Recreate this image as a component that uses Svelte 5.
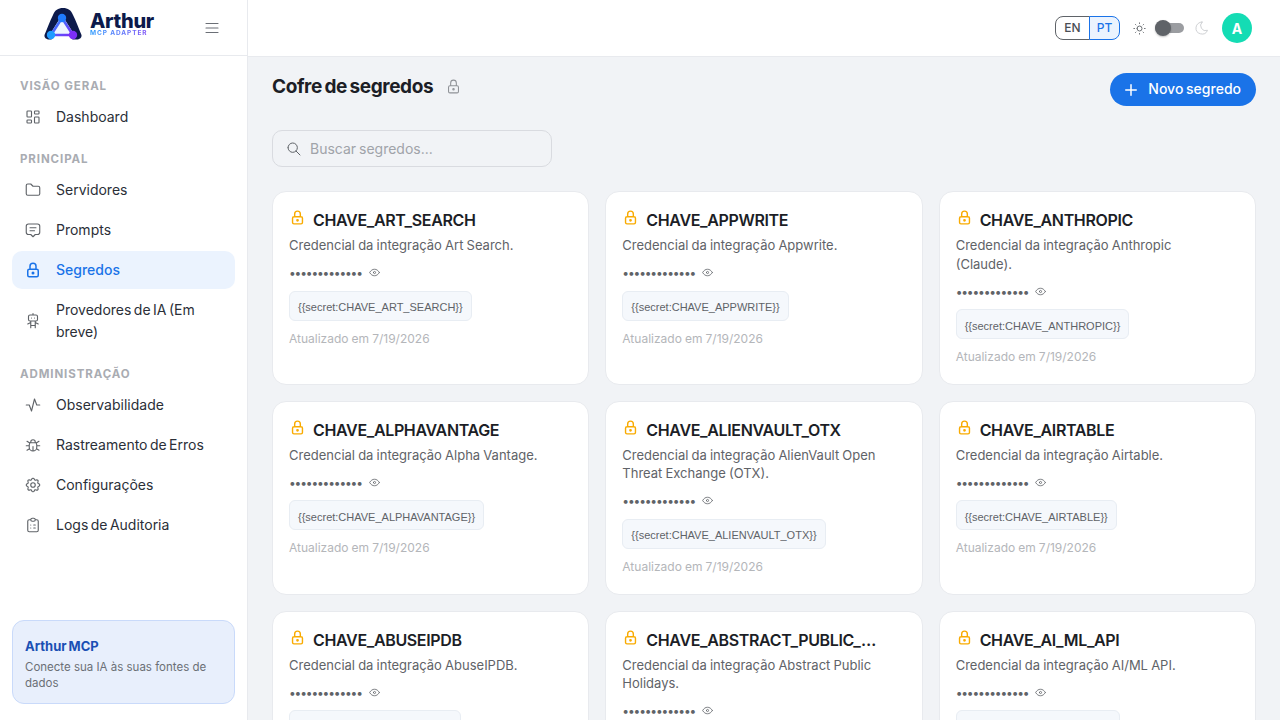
<script>
    const paths = {
        dashboard: "M5 4h4a1 1 0 0 1 1 1v6a1 1 0 0 1 -1 1h-4a1 1 0 0 1 -1 -1v-6a1 1 0 0 1 1 -1 M5 16h4a1 1 0 0 1 1 1v2a1 1 0 0 1 -1 1h-4a1 1 0 0 1 -1 -1v-2a1 1 0 0 1 1 -1 M15 12h4a1 1 0 0 1 1 1v6a1 1 0 0 1 -1 1h-4a1 1 0 0 1 -1 -1v-6a1 1 0 0 1 1 -1 M15 4h4a1 1 0 0 1 1 1v2a1 1 0 0 1 -1 1h-4a1 1 0 0 1 -1 -1v-2a1 1 0 0 1 1 -1",
        folder: "M5 4h4l3 3h7a2 2 0 0 1 2 2v8a2 2 0 0 1 -2 2h-14a2 2 0 0 1 -2 -2v-11a2 2 0 0 1 2 -2",
        message: "M8 9h8 M8 13h6 M9 18h-3a3 3 0 0 1 -3 -3v-8a3 3 0 0 1 3 -3h12a3 3 0 0 1 3 3v8a3 3 0 0 1 -3 3h-3l-3 3l-3 -3z",
        lock: "M5 13a2 2 0 0 1 2 -2h10a2 2 0 0 1 2 2v6a2 2 0 0 1 -2 2h-10a2 2 0 0 1 -2 -2v-6z M11 16a1 1 0 1 0 2 0a1 1 0 0 0 -2 0 M8 11v-4a4 4 0 1 1 8 0v4",
        robot: "M6 6a2 2 0 0 1 2 -2h8a2 2 0 0 1 2 2v4a2 2 0 0 1 -2 2h-8a2 2 0 0 1 -2 -2z M12 2v2 M9 12v9 M15 12v9 M5 16l4 -2 M15 14l4 2 M9 18h6 M10 8v.01 M14 8v.01",
        activity: "M3 12h4l3 8l4 -16l3 8h4",
        bug: "M9 9v-1a3 3 0 0 1 6 0v1 M8 9h8a6 6 0 0 1 1 3v3a5 5 0 0 1 -10 0v-3a6 6 0 0 1 1 -3 M3 13h4 M17 13h4 M12 20v-6 M4 19l3.35 -2 M20 19l-3.35 -2 M4 7l3.75 2.4 M20 7l-3.75 2.4",
        settings: "M10.325 4.317c.426 -1.756 2.924 -1.756 3.35 0a1.724 1.724 0 0 0 2.573 1.066c1.543 -.94 3.31 .826 2.37 2.37a1.724 1.724 0 0 0 1.065 2.572c1.756 .426 1.756 2.924 0 3.35a1.724 1.724 0 0 0 -1.066 2.573c.94 1.543 -.826 3.31 -2.37 2.37a1.724 1.724 0 0 0 -2.572 1.065c-.426 1.756 -2.924 1.756 -3.35 0a1.724 1.724 0 0 0 -2.573 -1.066c-1.543 .94 -3.31 -.826 -2.37 -2.37a1.724 1.724 0 0 0 -1.065 -2.572c-1.756 -.426 -1.756 -2.924 0 -3.35a1.724 1.724 0 0 0 1.066 -2.573c-.94 -1.543 .826 -3.31 2.37 -2.37c1 .608 2.296 .07 2.572 -1.065z M9 12a3 3 0 1 0 6 0a3 3 0 0 0 -6 0",
        clipboard: "M9 5h-2a2 2 0 0 0 -2 2v12a2 2 0 0 0 2 2h10a2 2 0 0 0 2 -2v-12a2 2 0 0 0 -2 -2h-2 M9 5a2 2 0 0 1 2 -2h2a2 2 0 0 1 2 2a2 2 0 0 1 -2 2h-2a2 2 0 0 1 -2 -2z M9 12h.01 M13 12h2 M9 16h.01 M13 16h2",
        menu: "M4 6h16 M4 12h16 M4 18h16",
        sun: "M8 12a4 4 0 1 0 8 0a4 4 0 1 0 -8 0 M3 12h1m8 -9v1m8 8h1m-9 8v1m-6.4 -15.4l.7 .7m12.1 -.7l-.7 .7m0 11.4l.7 .7m-12.1 -.7l-.7 .7",
        moon: "M12 3c.132 0 .263 0 .393 0a7.5 7.5 0 0 0 7.92 12.446a9 9 0 1 1 -8.313 -12.454z",
        search: "M3 10a7 7 0 1 0 14 0a7 7 0 1 0 -14 0 M21 21l-6 -6",
        eye: "M10 12a2 2 0 1 0 4 0a2 2 0 0 0 -4 0 M21 12c-2.4 4 -5.4 6 -9 6c-3.6 0 -6.6 -2 -9 -6c2.4 -4 5.4 -6 9 -6c3.6 0 6.6 2 9 6",
        plus: "M12 5v14 M5 12h14",
    };

    const nav = [
        { title: "VISÃO GERAL", items: [{ label: "Dashboard", icon: "dashboard" }] },
        {
            title: "PRINCIPAL",
            items: [
                { label: "Servidores", icon: "folder" },
                { label: "Prompts", icon: "message" },
                { label: "Segredos", icon: "lock", active: true },
                { label: "Provedores de IA (Em breve)", icon: "robot" },
            ],
        },
        {
            title: "ADMINISTRAÇÃO",
            items: [
                { label: "Observabilidade", icon: "activity" },
                { label: "Rastreamento de Erros", icon: "bug" },
                { label: "Configurações", icon: "settings" },
                { label: "Logs de Auditoria", icon: "clipboard" },
            ],
        },
    ];

    const secrets = [
        { key: "CHAVE_ART_SEARCH", name: "Art Search" },
        { key: "CHAVE_APPWRITE", name: "Appwrite" },
        { key: "CHAVE_ANTHROPIC", name: "Anthropic (Claude)" },
        { key: "CHAVE_ALPHAVANTAGE", name: "Alpha Vantage" },
        { key: "CHAVE_ALIENVAULT_OTX", name: "AlienVault Open Threat Exchange (OTX)" },
        { key: "CHAVE_AIRTABLE", name: "Airtable" },
        { key: "CHAVE_ABUSEIPDB", name: "AbuseIPDB" },
        { key: "CHAVE_ABSTRACT_PUBLIC_HOLIDAYS", name: "Abstract Public Holidays" },
        { key: "CHAVE_AI_ML_API", name: "AI/ML API" },
    ];
</script>

{#snippet icon(name, size = 18, width = 1.5)}
    <svg
        width={size}
        height={size}
        viewBox="0 0 24 24"
        fill="none"
        stroke="currentColor"
        stroke-width={width}
        stroke-linecap="round"
        stroke-linejoin="round"
    >
        <path d={paths[name]} />
    </svg>
{/snippet}

<div class="app">
    <aside class="sidebar">
        <div class="brand">
            <div class="logo">
                <svg width="38" height="33" viewBox="0 0 38 33">
                    <defs>
                        <linearGradient id="tri" x1="0" y1="0" x2="1" y2="1">
                            <stop offset="0" stop-color="#2a8cff" />
                            <stop offset="1" stop-color="#7b2ff7" />
                        </linearGradient>
                    </defs>
                    <path
                        d="M.5 28C3 22 6 14 9 8c2-5 5-7 10-7s8 2 10 7c3 6 6 14 8.500 20 .5 3-2.500 4.500-4.500 4.500H5C3 32.500 0 31 .5 28z"
                        fill="#0c1a4b"
                    />
                    <path d="M18 8 31 29l-3 4H8l-3-4z" fill="#fff" />
                    <path d="M18 11 7 28h22z" fill="#eef5ff" stroke="url(#tri)" stroke-width="2.600" />
                    <circle cx="18" cy="11" r="4.200" fill="#1f7bff" />
                    <circle cx="7" cy="28" r="4.200" fill="#1f9bff" />
                    <circle cx="29" cy="28" r="4.200" fill="#7b2ff7" />
                </svg>
                <div class="wordmark">
                    <span class="name">Arthur</span>
                    <span class="tag">MCP ADAPTER</span>
                </div>
            </div>
            <button class="menu">{@render icon("menu", 18)}</button>
        </div>

        <nav>
            {#each nav as group}
                <div class="group-title">{group.title}</div>
                {#each group.items as item}
                    <a class="item" class:active={item.active} href={"#"}>
                        <span class="item-icon">{@render icon(item.icon, 18, item.active ? 2 : 1.5)}</span>
                        <span>{item.label}</span>
                    </a>
                {/each}
            {/each}
        </nav>

        <div class="promo">
            <div class="promo-title">Arthur MCP</div>
            <div class="promo-text">Conecte sua IA às suas fontes de dados</div>
        </div>
    </aside>

    <div class="main">
        <header>
            <div class="lang">
                <button>EN</button>
                <button class="on">PT</button>
            </div>
            <span class="sun">{@render icon("sun", 15)}</span>
            <span class="switch"><span class="knob"></span></span>
            <span class="moon">{@render icon("moon", 16)}</span>
            <span class="avatar">A</span>
        </header>

        <main>
            <div class="page-head">
                <div class="page-title">
                    <h1>Cofre de segredos</h1>
                    <span class="title-lock">{@render icon("lock", 17)}</span>
                </div>
                <button class="new">{@render icon("plus", 18, 2)} <span>Novo segredo</span></button>
            </div>

            <label class="search">
                {@render icon("search", 16)}
                <input type="text" placeholder="Buscar segredos..." />
            </label>

            <div class="grid">
                {#each secrets as secret}
                    <article class="card">
                        <div class="card-head">
                            <span class="card-lock">{@render icon("lock", 17, 2)}</span>
                            <h3>{secret.key}</h3>
                        </div>
                        <p class="desc">Credencial da integração {secret.name}.</p>
                        <div class="value">
                            <span class="dots">•••••••••••••</span>
                            <span class="eye">{@render icon("eye", 13)}</span>
                        </div>
                        <code class="chip">{`{{secret:${secret.key}}}`}</code>
                        <div class="updated">Atualizado em 7/19/2026</div>
                    </article>
                {/each}
            </div>
        </main>
    </div>
</div>

<style>
    :global(body) {
        margin: 0;
        font-family: "Inter", "Open Sans", sans-serif;
        color: #1c1e26;
    }

    svg {
        display: block;
    }

    button {
        font-family: inherit;
        cursor: pointer;
    }

    .app {
        display: flex;
        height: 720px;
        overflow: hidden;
        background: #f1f3f6;
    }

    .sidebar {
        width: 247px;
        flex: none;
        display: flex;
        flex-direction: column;
        background: #fff;
        border-right: 1px solid #e8eaee;
    }

    .brand {
        height: 55px;
        flex: none;
        display: flex;
        align-items: center;
        justify-content: space-between;
        padding: 0 26px 0 44px;
        border-bottom: 1px solid #e8eaee;
    }

    .logo {
        display: flex;
        align-items: flex-start;
        gap: 8px;
        margin-top: -9px;
    }

    .wordmark {
        display: flex;
        flex-direction: column;
        margin-top: 6px;
    }

    .name {
        font-size: 20px;
        line-height: 17px;
        font-weight: 800;
        color: #0c1a4b;
        letter-spacing: -0.3px;
    }

    .tag {
        font-size: 6.500px;
        line-height: 6px;
        font-weight: 700;
        letter-spacing: 0.9px;
        background: linear-gradient(90deg, #2c9cff, #8a4bf5);
        -webkit-background-clip: text;
        background-clip: text;
        color: transparent;
    }

    .menu {
        border: 0;
        background: none;
        padding: 0;
        color: #6b6f76;
    }

    nav {
        flex: 1;
        padding: 0 12px;
    }

    .group-title {
        padding: 23px 8px 5px;
        font-size: 11.500px;
        line-height: 14px;
        font-weight: 700;
        letter-spacing: 0.9px;
        color: #a9acb2;
    }

    nav .item + .group-title {
        padding-top: 14px;
    }

    .item {
        display: flex;
        align-items: center;
        gap: 14px;
        padding: 8px 16px 8px 12px;
        margin-bottom: 2px;
        border-radius: 10px;
        font-size: 14px;
        line-height: 22px;
        color: #2b2f38;
        text-decoration: none;
        word-spacing: -1.500px;
    }

    .item-icon {
        flex: none;
        color: #5f6368;
    }

    .item.active {
        background: #ebf3fe;
        color: #1a73e8;
        font-weight: 500;
    }

    .item.active .item-icon {
        color: #1a73e8;
    }

    .promo {
        margin: 0 12px 16px;
        padding: 15px 12px 12px;
        border: 1px solid #c9dafa;
        border-radius: 12px;
        background: #e8effc;
    }

    .promo-title {
        font-size: 13px;
        line-height: 20px;
        font-weight: 700;
        color: #1a4fb4;
        word-spacing: -1px;
    }

    .promo-text {
        margin-top: 3px;
        font-size: 11.500px;
        line-height: 16px;
        color: #6b6f76;
    }

    .main {
        flex: 1;
        min-width: 0;
        display: flex;
        flex-direction: column;
    }

    header {
        height: 56px;
        flex: none;
        display: flex;
        align-items: center;
        justify-content: flex-end;
        padding: 0 28px 0 0;
        background: #fff;
        border-bottom: 1px solid #e8eaee;
    }

    .lang {
        display: flex;
        margin-top: -1px;
    }

    .lang button {
        width: 35px;
        height: 24px;
        padding: 0;
        border: 1px solid #5f6368;
        border-radius: 8px 0 0 8px;
        background: #fff;
        font-size: 12px;
        font-weight: 500;
        color: #4a4e55;
    }

    .lang button.on {
        width: 31px;
        margin-left: -1px;
        border-color: #1a73e8;
        border-radius: 0 8px 8px 0;
        background: #ebf3fe;
        color: #1a73e8;
    }

    .sun {
        margin-left: 12px;
        color: #5f6368;
    }

    .switch {
        position: relative;
        width: 29px;
        height: 10px;
        margin-left: 8px;
        border-radius: 5px;
        background: #9b9da1;
    }

    .knob {
        position: absolute;
        left: 0;
        top: -3px;
        width: 16px;
        height: 16px;
        border-radius: 50%;
        background: #5f6368;
        box-shadow: 0 1px 2px rgba(0, 0, 0, 0.25);
    }

    .moon {
        margin-left: 10px;
        color: #cfd1d4;
    }

    .avatar {
        width: 30px;
        height: 30px;
        margin-left: 12px;
        display: flex;
        align-items: center;
        justify-content: center;
        border-radius: 50%;
        background: #14dcb4;
        color: #fff;
        font-size: 14px;
        font-weight: 700;
    }

    main {
        flex: 1;
        min-height: 0;
        padding: 16px 24px 0;
    }

    .page-head {
        display: flex;
        align-items: flex-start;
        justify-content: space-between;
        margin-bottom: 24px;
    }

    .page-title {
        display: flex;
        align-items: center;
        gap: 12px;
        height: 27px;
    }

    h1 {
        margin: 0;
        font-size: 19px;
        line-height: 27px;
        font-weight: 700;
        color: #1c1e26;
        letter-spacing: -0.4px;
        word-spacing: -1.500px;
    }

    .title-lock {
        color: #8f9297;
    }

    .new {
        height: 33px;
        padding: 0 15px 2px 12px;
        display: flex;
        align-items: center;
        gap: 8px;
        border: 0;
        border-radius: 17px;
        background: #1a73e8;
        color: #fff;
        font-size: 14px;
        font-weight: 500;
        word-spacing: -1px;
    }

    .new svg {
        margin-top: 2px;
    }

    .search {
        width: 280px;
        height: 37px;
        box-sizing: border-box;
        display: flex;
        align-items: center;
        gap: 8px;
        padding: 0 13px;
        margin-bottom: 24px;
        border: 1px solid #d9dbe0;
        border-radius: 10px;
        color: #5f6368;
    }

    .search input {
        flex: 1;
        min-width: 0;
        padding: 0;
        border: 0;
        outline: 0;
        background: none;
        font: inherit;
        font-size: 14px;
        word-spacing: -1px;
    }

    .search input::placeholder {
        color: #a0a3a9;
        opacity: 1;
    }

    .grid {
        display: grid;
        grid-template-columns: repeat(3, 1fr);
        gap: 16px;
    }

    .card {
        min-width: 0;
        min-height: 193.800px;
        box-sizing: border-box;
        padding: 16px;
        display: flex;
        flex-direction: column;
        align-items: flex-start;
        border: 1px solid #e8eaee;
        border-radius: 14px;
        background: #fff;
    }

    .card-head {
        width: 100%;
        display: flex;
        align-items: flex-start;
        gap: 7px;
        height: 28px;
    }

    .card-lock {
        flex: none;
        margin-top: 1px;
        color: #f9ab00;
    }

    h3 {
        flex: 1;
        min-width: 0;
        margin: 0 28px 0 0;
        font-size: 16px;
        line-height: 24px;
        font-weight: 600;
        letter-spacing: -0.350px;
        color: #1c1e26;
        white-space: nowrap;
        overflow: hidden;
        text-overflow: ellipsis;
    }

    .desc {
        max-width: 262px;
        margin: 0 0 8px;
        font-size: 13px;
        line-height: 18.600px;
        color: #5f6368;
        word-spacing: -0.500px;
    }

    .value {
        display: flex;
        align-items: center;
        gap: 6px;
        height: 20px;
        margin-bottom: 8px;
    }

    .dots {
        font-size: 12px;
        letter-spacing: -1.150px;
        color: #5f6368;
    }

    .eye {
        color: #5f6368;
    }

    .chip {
        box-sizing: border-box;
        height: 30px;
        padding: 3px 8px 0;
        display: flex;
        align-items: center;
        border: 1px solid #e8edf3;
        border-radius: 6px;
        background: #f5f8fc;
        font-family: "Liberation Sans", sans-serif;
        font-size: 11px;
        color: #5f6368;
    }

    .updated {
        margin-top: 9px;
        font-size: 12px;
        line-height: 18px;
        color: #b4b6ba;
        word-spacing: -0.300px;
    }
</style>
